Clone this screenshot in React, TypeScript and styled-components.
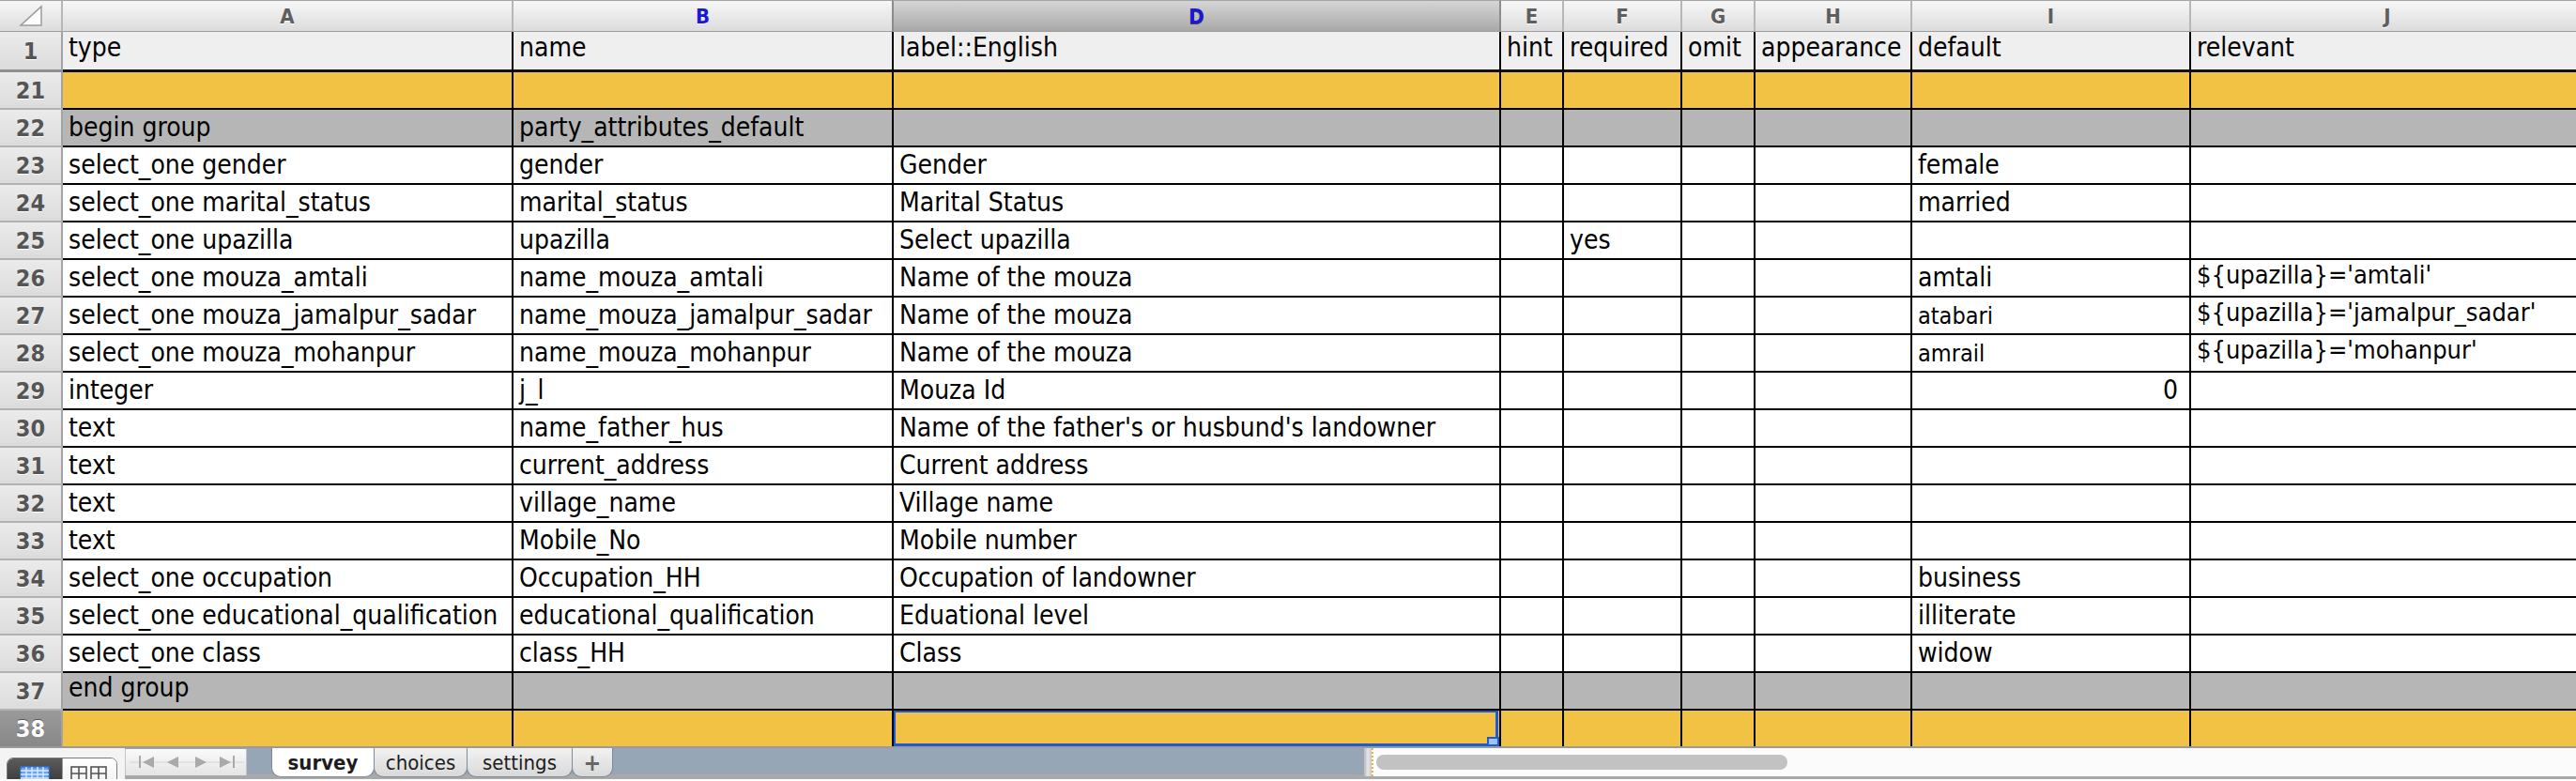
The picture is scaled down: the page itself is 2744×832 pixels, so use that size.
import React from "react"
import styled, { createGlobalStyle } from "styled-components"

const GlobalStyle = createGlobalStyle`
  html, body { margin: 0; padding: 0; background: #fff; }
  body { font-family: "DejaVu Sans Condensed", "DejaVu Sans", sans-serif; }
`

const COLUMNS = "67px 480px 405px 647px 67px 126px 78px 167px 297px 420px"
const LETTERS = ["A", "B", "D", "E", "F", "G", "H", "I", "J"]

type Align = "top" | "middle" | "bottom"
type Tone = "plain" | "header" | "orange" | "grey"
type Size = "small" | "normal" | "formula"

interface CellData {
  text?: string
  align?: Align
  right?: boolean
  size?: Size
}

interface RowData {
  num: number
  tone: Tone
  cells: (string | CellData)[]
}

const rows: RowData[] = [
  { num: 21, tone: "orange", cells: [] },
  { num: 22, tone: "grey", cells: ["begin group", "party_attributes_default"] },
  { num: 23, tone: "plain", cells: ["select_one gender", "gender", "Gender", "", "", "", "", "female"] },
  { num: 24, tone: "plain", cells: ["select_one marital_status", "marital_status", "Marital Status", "", "", "", "", { text: "married", align: "bottom" }] },
  { num: 25, tone: "plain", cells: ["select_one upazilla", "upazilla", "Select upazilla", "", "yes"] },
  {
    num: 26, tone: "plain", cells: [
      "select_one mouza_amtali", "name_mouza_amtali", "Name of the mouza", "", "", "", "",
      { text: "amtali", align: "bottom" }, { text: "${upazilla}='amtali'", align: "top", size: "formula" },
    ],
  },
  {
    num: 27, tone: "plain", cells: [
      "select_one mouza_jamalpur_sadar", "name_mouza_jamalpur_sadar", "Name of the mouza", "", "", "", "",
      { text: "atabari", align: "bottom", size: "small" }, { text: "${upazilla}='jamalpur_sadar'", align: "top", size: "formula" },
    ],
  },
  {
    num: 28, tone: "plain", cells: [
      "select_one mouza_mohanpur", "name_mouza_mohanpur", "Name of the mouza", "", "", "", "",
      { text: "amrail", align: "bottom", size: "small" }, { text: "${upazilla}='mohanpur'", align: "top", size: "formula" },
    ],
  },
  { num: 29, tone: "plain", cells: ["integer", "j_l", "Mouza Id", "", "", "", "", { text: "0", right: true }] },
  { num: 30, tone: "plain", cells: ["text", "name_father_hus", "Name of the father's or husbund's landowner"] },
  { num: 31, tone: "plain", cells: ["text", "current_address", "Current address"] },
  { num: 32, tone: "plain", cells: ["text", "village_name", "Village name"] },
  { num: 33, tone: "plain", cells: ["text", "Mobile_No", "Mobile number"] },
  { num: 34, tone: "plain", cells: ["select_one occupation", "Occupation_HH", "Occupation of landowner", "", "", "", "", "business"] },
  { num: 35, tone: "plain", cells: ["select_one educational_qualification", "educational_qualification", "Eduational level", "", "", "", "", "illiterate"] },
  { num: 36, tone: "plain", cells: ["select_one class", "class_HH", "Class", "", "", "", "", "widow"] },
  { num: 37, tone: "grey", cells: [{ text: "end group", align: "top" }] },
  { num: 38, tone: "orange", cells: [] },
]

const headerRow = ["type", "name", "label::English", "hint", "required", "omit", "appearance", "default", "relevant"]

const toneColors: Record<Tone, string> = {
  plain: "#ffffff",
  header: "#efefef",
  orange: "#f1c243",
  grey: "#b6b6b6",
}

const alignMap: Record<Align, string> = {
  top: "flex-start",
  middle: "center",
  bottom: "flex-end",
}

const sizeMap: Record<Size, string> = {
  small: "25px",
  normal: "28px",
  formula: "27px",
}

const CornerIcon = () => (
  <svg width="26" height="24" viewBox="0 0 26 24">
    <polygon points="24,2 24,22 2,22" fill="#fdfdfd" stroke="#9a9a9a" strokeWidth="1.5" />
  </svg>
)

const SheetIcon = () => (
  <svg width="32" height="16" viewBox="0 0 32 16">
    <rect x="1" y="1" width="30" height="16" fill="#6ea6ec" stroke="#2f74d6" strokeWidth="1.5" />
    {[7, 13, 19, 25].map((x) => (
      <line key={x} x1={x} y1="1" x2={x} y2="16" stroke="#d8e8ff" strokeWidth="1.4" />
    ))}
    {[5, 9, 13].map((y) => (
      <line key={y} x1="1" y1={y} x2="31" y2={y} stroke="#d8e8ff" strokeWidth="1.4" />
    ))}
  </svg>
)

const LayoutIcon = () => (
  <svg width="40" height="16" viewBox="0 0 40 16">
    {[1, 22].map((x) => (
      <g key={x} fill="none" stroke="#555" strokeWidth="1.6">
        <rect x={x} y="1" width="16" height="16" />
        <line x1={x + 8} y1="1" x2={x + 8} y2="16" />
        <line x1={x} y1="8" x2={x + 16} y2="8" />
      </g>
    ))}
  </svg>
)

const NavArrows = () => (
  <svg width="130" height="28" viewBox="0 0 130 28">
    <line x1="4" y1="14" x2="126" y2="14" stroke="#d4d4d4" strokeWidth="1" />
    <g fill="#a9a9a9">
      <rect x="14" y="7" width="2" height="13" />
      <polygon points="30,8 30,20 18,14" />
      <polygon points="56,8 56,20 44,14" />
      <polygon points="74,8 74,20 86,14" />
      <polygon points="100,8 100,20 112,14" />
      <rect x="114" y="7" width="2" height="13" />
    </g>
  </svg>
)

export default function App() {
  return (
    <>
      <GlobalStyle />
      <S.Page>
        <S.Sheet>
          <S.GridRow $height={34}>
            <S.ColHead>
              <CornerIcon />
            </S.ColHead>
            {LETTERS.map((l) => (
              <S.ColHead key={l} $selected={l === "D"} $blue={l === "B" || l === "D"}>
                {l}
              </S.ColHead>
            ))}
          </S.GridRow>

          <S.GridRow $height={43}>
            <S.RowHead $frozen>1</S.RowHead>
            {headerRow.map((t, i) => (
              <S.Cell key={i} $tone="header" $align="middle" $size="normal" $frozen>
                {t}
              </S.Cell>
            ))}
          </S.GridRow>

          {rows.map((row) => (
            <S.GridRow key={row.num} $height={40}>
              <S.RowHead $selected={row.num === 38}>{row.num}</S.RowHead>
              {LETTERS.map((l, i) => {
                const raw = row.cells[i]
                const cell: CellData = typeof raw === "string" ? { text: raw } : raw || {}
                const selected = row.num === 38 && l === "D"
                return (
                  <S.Cell
                    key={l}
                    $tone={row.tone}
                    $align={cell.align || "middle"}
                    $right={cell.right}
                    $size={cell.size || "normal"}
                  >
                    {cell.text}
                    {selected && (
                      <S.Selection>
                        <S.Handle />
                      </S.Selection>
                    )}
                  </S.Cell>
                )
              })}
            </S.GridRow>
          ))}
        </S.Sheet>

        <S.TabBar>
          <S.LeftTools>
            <S.ViewToggle>
              <S.ViewButton $active>
                <SheetIcon />
              </S.ViewButton>
              <S.ViewButton>
                <LayoutIcon />
              </S.ViewButton>
            </S.ViewToggle>
          </S.LeftTools>
          <S.NavBox>
            <NavArrows />
          </S.NavBox>
          <S.Tabs>
            <S.Tab $active $width={110}>survey</S.Tab>
            <S.Tab $width={100}>choices</S.Tab>
            <S.Tab $width={113}>settings</S.Tab>
            <S.Tab $width={44} $plus>+</S.Tab>
          </S.Tabs>
          <S.Filler />
          <S.Splitter />
          <S.ScrollTrack>
            <S.Thumb />
          </S.ScrollTrack>
        </S.TabBar>
      </S.Page>
    </>
  )
}

const S = {
  Page: styled.div`
    width: 2744px;
    height: 832px;
    overflow: hidden;
    display: flex;
    flex-direction: column;
    background: #fff;
    color: #000;
    font-family: "DejaVu Sans Condensed", "DejaVu Sans", sans-serif;
  `,
  Sheet: styled.div`
    height: 795px;
    flex-shrink: 0;
    overflow: hidden;
  `,
  GridRow: styled.div<{ $height: number }>`
    display: grid;
    grid-template-columns: ${COLUMNS};
    height: ${(p) => p.$height}px;
  `,
  ColHead: styled.div<{ $selected?: boolean; $blue?: boolean }>`
    display: flex;
    align-items: center;
    justify-content: center;
    box-sizing: border-box;
    border-top: 1px solid #a5a5a5;
    border-bottom: 1px solid #9d9d9d;
    border-right: 2px solid ${(p) => (p.$selected ? "#8c8c8c" : "#b7b7b7")};
    border-left: ${(p) => (p.$selected ? "2px solid #8c8c8c" : "none")};
    margin-left: ${(p) => (p.$selected ? "-2px" : "0")};
    background: ${(p) => (p.$selected ? "linear-gradient(#d6d6d6, #a8a8a8)" : "linear-gradient(#f7f7f7, #dcdcdc)")};
    font-size: 22px;
    font-weight: bold;
    color: ${(p) => (p.$blue ? "#1818d6" : "#5e5e5e")};
    text-shadow: ${(p) => (p.$selected ? "0 1px 0 #444" : "0 1px 0 #fff")};
  `,
  RowHead: styled.div<{ $selected?: boolean; $frozen?: boolean }>`
    display: flex;
    align-items: center;
    justify-content: center;
    box-sizing: border-box;
    border-right: 2px solid #a3a3a3;
    border-bottom: ${(p) => (p.$frozen ? "3px solid #8f8f8f" : "2px solid #b3b3b3")};
    background: ${(p) => (p.$selected ? "linear-gradient(#9a9a9a, #878787)" : "linear-gradient(#ebebeb, #dcdcdc)")};
    font-size: 25px;
    font-weight: bold;
    color: ${(p) => (p.$selected ? "#fff" : "#555")};
    text-shadow: ${(p) => (p.$selected ? "0 -1px 0 #555" : "0 1px 0 #fff")};
  `,
  Cell: styled.div<{ $tone: Tone; $align: Align; $right?: boolean; $size: Size; $frozen?: boolean }>`
    position: relative;
    display: flex;
    box-sizing: border-box;
    min-width: 0;
    overflow: hidden;
    align-items: ${(p) => alignMap[p.$align]};
    justify-content: ${(p) => (p.$right ? "flex-end" : "flex-start")};
    padding: ${(p) => (p.$align === "bottom" ? "0 6px 3px 6px" : p.$frozen ? "0 6px 5px 6px" : "0 6px")};
    padding-right: ${(p) => (p.$right ? "12px" : "6px")};
    border-right: 2px solid #000;
    border-bottom: ${(p) => (p.$frozen ? "3px solid #111" : "2px solid #000")};
    background: ${(p) => toneColors[p.$tone]};
    font-size: ${(p) => sizeMap[p.$size]};
    line-height: 1.15;
    white-space: nowrap;
  `,
  Selection: styled.div`
    position: absolute;
    inset: -1px 1px 0 -1px;
    border: 3px solid #1c5ad8;
  `,
  Handle: styled.div`
    position: absolute;
    right: -4px;
    bottom: -3px;
    width: 9px;
    height: 6px;
    background: #9cc2f2;
    border: 2px solid #1c5ad8;
  `,
  TabBar: styled.div`
    display: flex;
    height: 35px;
    flex-shrink: 0;
    box-sizing: border-box;
    border-top: 2px solid #9b9b9b;
    background: #97a6b6;
    box-shadow: inset 0 -5px 0 #a9a9a9;
  `,
  LeftTools: styled.div`
    width: 133px;
    flex-shrink: 0;
    background: #f4f4f4;
    overflow: hidden;
    padding: 10px 0 0 7px;
    box-sizing: border-box;
  `,
  ViewToggle: styled.div`
    display: flex;
    width: 116px;
    height: 30px;
    border: 1px solid #7a7a7a;
    border-radius: 7px 7px 0 0;
    overflow: hidden;
  `,
  ViewButton: styled.div<{ $active?: boolean }>`
    flex: 1;
    display: flex;
    justify-content: center;
    padding-top: 8px;
    background: ${(p) => (p.$active ? "linear-gradient(#5c5c5c, #343434)" : "linear-gradient(#ffffff, #f0f0f0)")};
    border-left: ${(p) => (p.$active ? "none" : "1px solid #9a9a9a")};
  `,
  NavBox: styled.div`
    width: 130px;
    height: 28px;
    margin-top: 1px;
    flex-shrink: 0;
    background: linear-gradient(#fafafa, #e4e4e4);
    border-left: 1px solid #c4c4c4;
    border-right: 1px solid #c4c4c4;
    box-sizing: border-box;
  `,
  Tabs: styled.div`
    display: flex;
    margin-left: 26px;
    height: 31px;
  `,
  Tab: styled.div<{ $active?: boolean; $width: number; $plus?: boolean }>`
    width: ${(p) => p.$width}px;
    display: flex;
    align-items: center;
    justify-content: center;
    box-sizing: border-box;
    border: 1px solid #7d8b99;
    border-top: none;
    border-radius: 0 0 10px 10px;
    margin-right: -1px;
    background: ${(p) => (p.$active ? "#ffffff" : "linear-gradient(#f2f2f2, #d9d9d9)")};
    font-size: ${(p) => (p.$plus ? "25px" : "22px")};
    font-weight: ${(p) => (p.$active || p.$plus ? "bold" : "normal")};
    color: ${(p) => (p.$plus ? "#666" : "#1c1c1c")};
    z-index: ${(p) => (p.$active ? 1 : 0)};
  `,
  Filler: styled.div`
    flex: 1;
  `,
  Splitter: styled.div`
    width: 8px;
    height: 30px;
    flex-shrink: 0;
    background: linear-gradient(90deg, #b9b9b9, #e6e6e6, #c8c8c8);
  `,
  ScrollTrack: styled.div`
    width: 1283px;
    height: 30px;
    flex-shrink: 0;
    box-sizing: border-box;
    background: #fbfbfb;
    border-left: 2px dotted #e4b43a;
    padding: 7px 0 0 3px;
  `,
  Thumb: styled.div`
    width: 438px;
    height: 16px;
    border-radius: 8px;
    background: #c2c2c2;
  `,
}
